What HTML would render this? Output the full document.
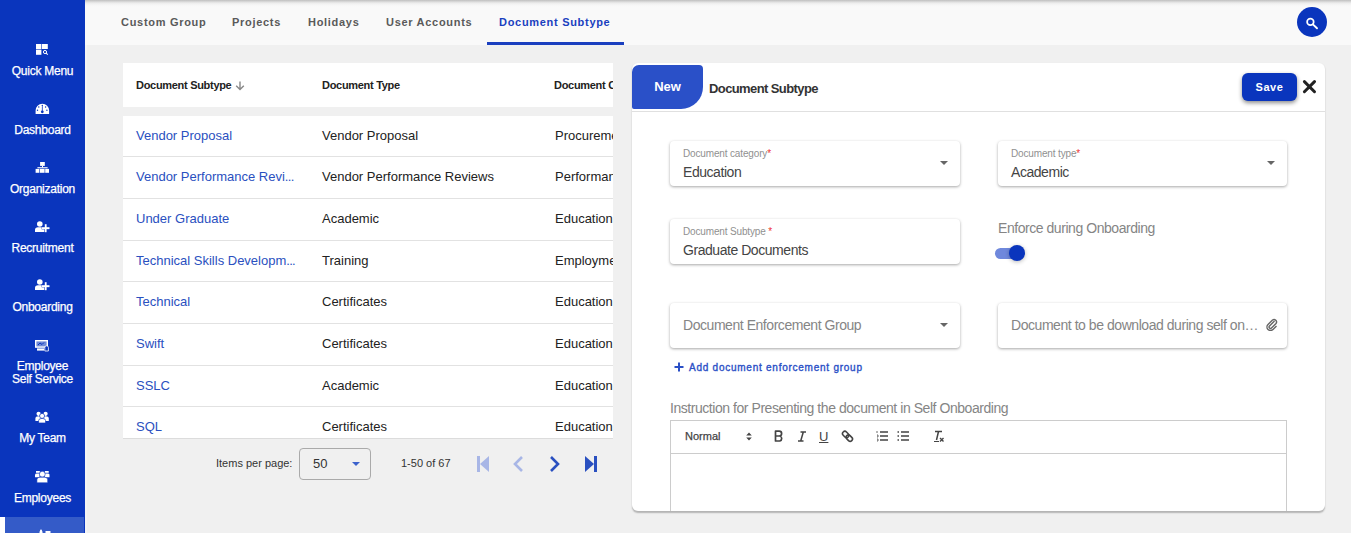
<!DOCTYPE html>
<html><head><meta charset="utf-8">
<style>
*{box-sizing:border-box;margin:0;padding:0}
html,body{width:1351px;height:533px;overflow:hidden;background:#f0f0f0;font-family:"Liberation Sans",sans-serif;position:relative}
.abs{position:absolute}
#side{left:0;top:0;width:85px;height:533px;background:#0a35bd;color:#fff}
.si{position:absolute;left:0;width:85px;text-align:center;font-size:12px;line-height:13px;white-space:nowrap;letter-spacing:-0.25px;-webkit-text-stroke:0.25px #fff}
.si svg{display:block;margin:0 auto}
#active{left:0;top:517px;width:84px;height:20px;background:#345bc8;border-left:5px solid #fff}
#hdr{left:85px;top:0;width:1266px;height:45px;background:linear-gradient(to bottom,#bfbfbf 0px,#d6d6d6 1.5px,#ececec 3px,#f6f6f6 5px,#f9f9f9 7px)}
#sidecol{left:85px;top:45px;width:2px;height:488px;background:#f4f4f4}
.tab{position:absolute;top:15px;font-size:11px;font-weight:bold;letter-spacing:0.7px;color:#5a5a5a;line-height:14px}
#tabline{left:487px;top:42px;width:137px;height:3px;background:#1a3fbf}
#search{left:1297px;top:7px;width:30px;height:30px;border-radius:50%;background:#0a35bd}
#tbl{left:123px;top:63px;width:490px;height:375px;overflow:hidden;box-shadow:0 1px 0 #dcdcdc}
.th{position:absolute;top:0;height:44px;background:#fff;width:490px}
.hd{position:absolute;top:16px;white-space:nowrap;font-size:11px;font-weight:bold;color:#222;line-height:13px;letter-spacing:-0.3px}
.row{position:absolute;left:0;width:490px;height:41.67px;background:#fff;border-bottom:1px solid #e2e2e2}
.c1,.c2,.c3{position:absolute;top:12px;font-size:13px;line-height:15px;white-space:nowrap}
.c1{left:13px;color:#2a50c0}
.c2{left:199px;color:#222}
.c3{left:432px;color:#222}
#pg{left:123px;top:439px;width:490px;height:50px}
#panel{left:632px;top:63px;width:693px;height:448px;background:#fff;border-radius:6px;box-shadow:0 1.5px 1.5px rgba(0,0,0,0.25);overflow:hidden}
#newtab{left:0;top:1px;width:71px;height:44px;background:#2a50c8;border-radius:7px 4px 22px 2px;color:#fff;font-size:13px;font-weight:bold;text-align:center;line-height:44px}
#ptitle{left:77px;top:17px;font-size:13px;font-weight:bold;color:#333;line-height:16px;letter-spacing:-0.6px}
#phline{left:0;top:47px;width:693px;height:1px;background:#e0e0e0}
#save{left:610px;top:9px;width:55px;height:28px;background:#0a35bd;border-radius:6px;color:#fff;font-size:11px;font-weight:bold;text-align:center;line-height:28px;letter-spacing:0.6px;box-shadow:0 2px 4px rgba(0,0,0,0.45)}
.fld{position:absolute;width:290px;height:45px;background:#fff;border-radius:4px;box-shadow:0 1px 3px rgba(0,0,0,0.35)}
.lbl{position:absolute;left:13px;top:7px;font-size:10px;color:#909090;line-height:11px;letter-spacing:-0.15px}
.val{position:absolute;left:13px;top:23px;font-size:14px;color:#444;line-height:16px;letter-spacing:-0.45px}
.req{color:#e33}
.caret{position:absolute;right:12px;top:20px;width:0;height:0;border-left:4px solid transparent;border-right:4px solid transparent;border-top:4px solid #666}
.ph{position:absolute;left:13px;top:14px;font-size:14px;color:#858585;line-height:16px;white-space:nowrap;letter-spacing:-0.45px}
</style></head>
<body>
<div id="side" class="abs">
  <svg class="abs" style="left:34px;top:44px" width="16" height="12" viewBox="0 0 16 12"><rect x="2" y="0" width="5.4" height="5" fill="#fff"/><rect x="8" y="0" width="5.8" height="5" fill="#fff"/><rect x="2" y="5.6" width="5.4" height="5.2" fill="#fff"/><circle cx="11" cy="8" r="1.6" fill="none" stroke="#fff" stroke-width="1"/><line x1="12.1" y1="9.1" x2="13.8" y2="10.6" stroke="#fff" stroke-width="1.1"/></svg>
  <div class="si" style="top:65px;line-height:13px">Quick Menu</div>
  <svg class="abs" style="left:34px;top:103px" width="16" height="12" viewBox="0 0 16 12"><path d="M1.6 11 L1.6 7.55 A6.75 6.75 0 0 1 15.1 7.55 L15.1 11Z" fill="#fff"/><circle cx="8.3" cy="8.8" r="1.4" fill="#0a35bd"/><path d="M8.3 8.8 L8.4 3.2" stroke="#0a35bd" stroke-width="0.8"/><circle cx="8.3" cy="2.5" r="0.7" fill="#0a35bd"/><circle cx="4.8" cy="4" r="0.7" fill="#0a35bd"/><circle cx="11.6" cy="4" r="0.7" fill="#0a35bd"/><circle cx="3.5" cy="7.3" r="0.7" fill="#0a35bd"/><circle cx="12.9" cy="7.3" r="0.7" fill="#0a35bd"/></svg>
  <div class="si" style="top:123.5px;line-height:13px">Dashboard</div>
  <svg class="abs" style="left:34px;top:162px" width="16" height="12" viewBox="0 0 16 12"><rect x="6.1" y="0" width="4.7" height="3.9" fill="#fff"/><rect x="8" y="3.9" width="1" height="1.4" fill="#fff"/><rect x="3.4" y="5.2" width="10.2" height="1.1" fill="#fff"/><rect x="1.6" y="6.9" width="3.8" height="3.9" fill="#fff"/><rect x="6" y="6.9" width="4.6" height="3.9" fill="#fff"/><rect x="11.2" y="6.9" width="3.8" height="3.9" fill="#fff"/></svg>
  <div class="si" style="top:183px;line-height:13px">Organization</div>
  <svg class="abs" style="left:34px;top:221px" width="16" height="12" viewBox="0 0 16 12"><circle cx="5.8" cy="3" r="2.8" fill="#fff"/><path d="M1 11 L1 8.8 Q1 6.2 4 6.2 L7.5 6.2 Q9.8 6.2 10.3 8 L10.3 11Z" fill="#fff"/><rect x="7.9" y="6.3" width="7.5" height="1.8" fill="#fff" stroke="#0a35bd" stroke-width="0.5"/><rect x="10.8" y="3.2" width="1.8" height="8" fill="#fff"/><rect x="7.9" y="6.3" width="7.5" height="1.8" fill="#fff"/></svg>
  <div class="si" style="top:242px;line-height:13px">Recruitment</div>
  <svg class="abs" style="left:34px;top:279px" width="16" height="12" viewBox="0 0 16 12"><circle cx="5.8" cy="3" r="2.8" fill="#fff"/><path d="M1 11 L1 8.8 Q1 6.2 4 6.2 L7.5 6.2 Q9.8 6.2 10.3 8 L10.3 11Z" fill="#fff"/><rect x="7.9" y="6.3" width="7.5" height="1.8" fill="#fff" stroke="#0a35bd" stroke-width="0.5"/><rect x="10.8" y="3.2" width="1.8" height="8" fill="#fff"/><rect x="7.9" y="6.3" width="7.5" height="1.8" fill="#fff"/></svg>
  <div class="si" style="top:301px;line-height:13px">Onboarding</div>
  <svg class="abs" style="left:34px;top:340px" width="16" height="12" viewBox="0 0 16 12"><rect x="1" y="0" width="13" height="7.8" fill="#fff"/><rect x="2.4" y="1.4" width="10.2" height="5" fill="#6f8ad8"/><path d="M4 5 L6 3 L8 4.5 L10 2.5" stroke="#0a35bd" stroke-width="1" fill="none"/><rect x="3" y="8.4" width="7" height="2.2" fill="#fff"/><path d="M10.8 11 L10.8 7.5 Q10.8 5.8 12.6 5.8 Q14.4 5.8 14.4 7.5 L14.4 11Z" fill="#0a35bd" stroke="#fff" stroke-width="0.8"/></svg>
  <div class="si" style="top:360px;line-height:13px">Employee<br>Self Service</div>
  <svg class="abs" style="left:34px;top:411px" width="16" height="13" viewBox="0 0 16 13"><circle cx="4.6" cy="2.8" r="2.1" fill="#fff"/><circle cx="11.6" cy="2.8" r="2.1" fill="#fff"/><path d="M1.4 10 L1.4 7.5 Q1.4 5.3 4.6 5.3 Q7.8 5.3 7.8 7.5 L7.8 10Z" fill="#fff"/><path d="M8.4 10 L8.4 7.5 Q8.4 5.3 11.6 5.3 Q14.8 5.3 14.8 7.5 L14.8 10Z" fill="#fff"/><circle cx="8.1" cy="4.9" r="2.5" fill="#fff" stroke="#0a35bd" stroke-width="0.7"/><path d="M4.6 12 L4.6 9.6 Q4.6 7.4 8.1 7.4 Q11.6 7.4 11.6 9.6 L11.6 12Z" fill="#fff" stroke="#0a35bd" stroke-width="0.7"/></svg>
  <div class="si" style="top:432px;line-height:13px">My Team</div>
  <svg class="abs" style="left:34px;top:470px" width="17" height="13" viewBox="0 0 17 13"><rect x="2" y="1" width="3.8" height="1.8" fill="#fff"/><rect x="10.9" y="1" width="3.8" height="1.8" fill="#fff"/><path d="M1 7.3 L1 4.8 Q1 3.4 3 3.4 L5.5 3.4 L5.5 7.3Z" fill="#fff"/><path d="M15.5 7.3 L15.5 4.8 Q15.5 3.4 13.5 3.4 L11 3.4 L11 7.3Z" fill="#fff"/><circle cx="8.3" cy="4.2" r="2.9" fill="#fff" stroke="#0a35bd" stroke-width="0.6"/><path d="M2.9 12.8 L2.9 9.8 Q2.9 7.2 6 7.2 L10.6 7.2 Q13.7 7.2 13.7 9.8 L13.7 12.8Z" fill="#fff" stroke="#0a35bd" stroke-width="0.6"/></svg>
  <div class="si" style="top:492px;line-height:13px">Employees</div>
</div>
<div id="active" class="abs"></div>
<svg class="abs" style="left:38px;top:529px" width="14" height="4" viewBox="0 0 14 4"><path d="M1.5 4 L1.5 2.5 Q3 1 4.5 2.5 L4.5 4Z" fill="#fff"/><circle cx="3" cy="1.6" r="1" fill="#fff"/><rect x="7.5" y="2" width="5" height="2" fill="#fff"/></svg>

<div id="sidecol" class="abs"></div>
<div id="hdr" class="abs">
  <div class="tab" style="left:36px">Custom Group</div>
  <div class="tab" style="left:147px">Projects</div>
  <div class="tab" style="left:223px">Holidays</div>
  <div class="tab" style="left:301px">User Accounts</div>
  <div class="tab" style="left:414px;color:#1a3fbf">Document Subtype</div>
</div>
<div id="tabline" class="abs"></div>
<div id="search" class="abs"><svg width="30" height="30" viewBox="0 0 30 30"><circle cx="13.4" cy="14.9" r="3.3" fill="none" stroke="#fff" stroke-width="1.7"/><line x1="15.9" y1="17.4" x2="20" y2="21.3" stroke="#fff" stroke-width="1.9" stroke-linecap="round"/></svg></div>

<div id="tbl" class="abs">
  <div class="th"><div class="hd" style="left:13px">Document Subtype</div><svg class="abs" style="left:112px;top:18px" width="10" height="10" viewBox="0 0 10 10"><path d="M5 0.5V8.5M1.2 4.8L5 8.6L8.8 4.8" stroke="#888" stroke-width="1.4" fill="none"/></svg><div class="hd" style="left:199px">Document Type</div><div class="hd" style="left:431px">Document Category</div></div>
  <div class="row" style="top:52.8px"><div class="c1">Vendor Proposal</div><div class="c2">Vendor Proposal</div><div class="c3">Procurement</div></div>
  <div class="row" style="top:94.47px"><div class="c1">Vendor Performance Revi<span style="letter-spacing:-0.7px">...</span></div><div class="c2">Vendor Performance Reviews</div><div class="c3">Performance</div></div>
  <div class="row" style="top:136.14px"><div class="c1">Under Graduate</div><div class="c2">Academic</div><div class="c3">Education</div></div>
  <div class="row" style="top:177.81px"><div class="c1">Technical Skills Developm<span style="letter-spacing:-0.7px">...</span></div><div class="c2">Training</div><div class="c3">Employment</div></div>
  <div class="row" style="top:219.48px"><div class="c1">Technical</div><div class="c2">Certificates</div><div class="c3">Education</div></div>
  <div class="row" style="top:261.15px"><div class="c1">Swift</div><div class="c2">Certificates</div><div class="c3">Education</div></div>
  <div class="row" style="top:302.82px"><div class="c1">SSLC</div><div class="c2">Academic</div><div class="c3">Education</div></div>
  <div class="row" style="top:344.49px"><div class="c1">SQL</div><div class="c2">Certificates</div><div class="c3">Education</div></div>
</div>
<div id="pg" class="abs">
  <div class="abs" style="left:93px;top:18px;font-size:11px;color:#333;line-height:13px">Items per page:</div>
  <div class="abs" style="left:176px;top:9px;width:72px;height:32px;border:1px solid #aaa;border-radius:4px;background:#f0f0f0"></div>
  <div class="abs" style="left:190px;top:17px;font-size:13px;color:#333;line-height:15px">50</div>
  <div class="abs" style="left:229px;top:23px;width:0;height:0;border-left:4px solid transparent;border-right:4px solid transparent;border-top:4px solid #3c62cc"></div>
  <div class="abs" style="left:278px;top:18px;font-size:11px;color:#333;line-height:13px">1-50 of 67</div>
  <svg class="abs" style="left:353px;top:16px" width="14" height="18" viewBox="0 0 14 18"><rect x="1" y="1" width="3" height="16" fill="#a8b6e6"/><path d="M13 1 L4 9 L13 17Z" fill="#a8b6e6"/></svg>
  <svg class="abs" style="left:389px;top:16px" width="12" height="18" viewBox="0 0 12 18"><path d="M10 2 L3 9 L10 16" fill="none" stroke="#a8b6e6" stroke-width="2.6"/></svg>
  <svg class="abs" style="left:426px;top:16px" width="12" height="18" viewBox="0 0 12 18"><path d="M2 2 L9 9 L2 16" fill="none" stroke="#2a50c0" stroke-width="2.6"/></svg>
  <svg class="abs" style="left:461px;top:16px" width="14" height="18" viewBox="0 0 14 18"><rect x="10" y="1" width="3" height="16" fill="#2a50c0"/><path d="M1 1 L10 9 L1 17Z" fill="#2a50c0"/></svg>
</div>
<div id="panel" class="abs"><div class="abs" style="left:0;top:1px;width:693px;height:447px">
  <div id="newtab" class="abs">New</div>
  <div id="ptitle" class="abs">Document Subtype</div>
  <div id="phline" class="abs"></div>
  <div id="save" class="abs">Save</div>
  <svg class="abs" style="left:669px;top:15px" width="16" height="16" viewBox="0 0 16 16"><path d="M3.4 2.6 L13.5 12.7 M13.5 2.6 L3.4 12.7" stroke="#222" stroke-width="3" stroke-linecap="round"/></svg>
  <div class="fld" style="left:38px;top:77px"><div class="lbl">Document category<span class="req">*</span></div><div class="val">Education</div><div class="caret"></div></div>
  <div class="fld" style="left:366px;top:77px;width:289px"><div class="lbl">Document type<span class="req">*</span></div><div class="val">Academic</div><div class="caret"></div></div>
  <div class="fld" style="left:38px;top:155px"><div class="lbl">Document Subtype <span class="req">*</span></div><div class="val">Graduate Documents</div></div>
  <div class="abs" style="left:366px;top:156px;font-size:14px;color:#858585;line-height:16px;letter-spacing:-0.45px">Enforce during Onboarding</div>
  <div class="abs" style="left:363px;top:184px;width:28px;height:11px;border-radius:6px;background:#6f88dc"></div>
  <div class="abs" style="left:377px;top:181px;width:16px;height:16px;border-radius:50%;background:#0a35bd;box-shadow:0 1px 4px rgba(0,0,0,0.28)"></div>
  <div class="fld" style="left:38px;top:239px"><div class="ph">Document Enforcement Group</div><div class="caret" style="top:20px"></div></div>
  <div class="fld" style="left:366px;top:239px;width:289px"><div class="ph">Document to be download during self on&#8230;</div><svg class="abs" style="left:267px;top:14px" width="14" height="14" viewBox="0 0 14 14"><path d="M9.5 4 L4.5 9 A1.4 1.4 0 0 0 6.5 11 L11 6.5 A2.5 2.5 0 0 0 7.5 3 L3 7.5 A3.5 3.5 0 0 0 8 12.5 L11.5 9" fill="none" stroke="#666" stroke-width="1.4"/></svg></div>
  <svg class="abs" style="left:42px;top:298px" width="10" height="10" viewBox="0 0 10 10"><path d="M5 0.5V9.5M0.5 5H9.5" stroke="#2a4fc6" stroke-width="2"/></svg><div id="addg" class="abs" style="left:57px;top:297.5px;font-size:10px;color:#2a4fc6;letter-spacing:0.75px;line-height:12px;-webkit-text-stroke:0.35px #2a4fc6;white-space:nowrap">Add document enforcement group</div>
  <div class="abs" style="left:38px;top:336px;font-size:14px;color:#858585;line-height:16px;letter-spacing:-0.45px">Instruction for Presenting the document in Self Onboarding</div>
  <div class="abs" style="left:38px;top:356px;width:617px;height:120px;border:1px solid #ccc"></div>
  <div class="abs" style="left:38px;top:389px;width:617px;height:1px;background:#ccc"></div>
  <div class="abs" style="left:53px;top:366px;font-size:11px;color:#444;line-height:13px;-webkit-text-stroke:0.25px #444">Normal</div>
  <svg class="abs" style="left:113px;top:367px" width="8" height="11" viewBox="0 0 8 11"><path d="M1.2 4.6 L4 1.6 L6.8 4.6Z M1.2 6.4 L4 9.4 L6.8 6.4Z" fill="#444"/></svg>
  <svg class="abs" style="left:142px;top:366px" width="10" height="12" viewBox="0 0 10 12"><path d="M1.5 1.2 H5.2 A2.4 2.4 0 0 1 5.2 6 H1.5 Z M1.5 6 H5.8 A2.6 2.6 0 0 1 5.8 11 H1.5 Z" fill="none" stroke="#444" stroke-width="1.7" stroke-linejoin="round"/></svg>
  <svg class="abs" style="left:165px;top:367px" width="10" height="11" viewBox="0 0 10 11"><path d="M3.5 1H9M1 10H6.5M6.3 1L3.7 10" stroke="#444" stroke-width="1.5" fill="none"/></svg>
  <div class="abs" style="left:187px;top:365px;font-size:13px;color:#444;line-height:15px;text-decoration:underline">U</div>
  <svg class="abs" style="left:209px;top:366px" width="13" height="13" viewBox="0 0 13 13"><rect x="1.2" y="2.2" width="7" height="4.6" rx="2.3" transform="rotate(45 4.7 4.5)" fill="none" stroke="#444" stroke-width="1.6"/><rect x="4.8" y="5.8" width="7" height="4.6" rx="2.3" transform="rotate(45 8.3 8.1)" fill="none" stroke="#444" stroke-width="1.6"/></svg>
  <svg class="abs" style="left:244px;top:366px" width="13" height="12" viewBox="0 0 13 12"><path d="M4 2H12M4 6H12M4 10H12" stroke="#444" stroke-width="1.5"/><path d="M1 1V3M1 5H2V7H1M1 9H2V11H1" stroke="#444" stroke-width="0.8" fill="none"/></svg>
  <svg class="abs" style="left:265px;top:366px" width="13" height="12" viewBox="0 0 13 12"><path d="M4 2H12M4 6H12M4 10H12" stroke="#444" stroke-width="1.5"/><path d="M0.5 2H2M0.5 6H2M0.5 10H2" stroke="#444" stroke-width="1.5"/></svg>
  <svg class="abs" style="left:300px;top:366px" width="13" height="13" viewBox="0 0 13 13"><path d="M3 1.5H10M6.5 1.5L4.5 10" stroke="#444" stroke-width="1.5" fill="none"/><path d="M2 11.5H7" stroke="#444" stroke-width="1"/><path d="M8 8L11.5 11.5M11.5 8L8 11.5" stroke="#444" stroke-width="1.4"/></svg>
</div>
</div>
</body></html>
